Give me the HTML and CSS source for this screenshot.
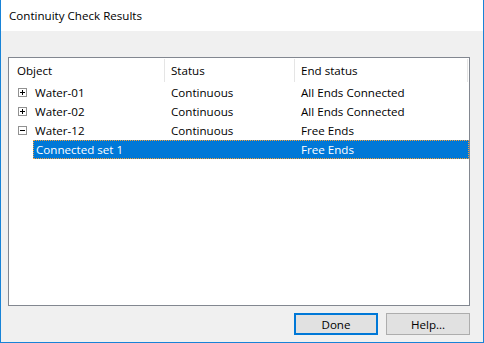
FILE: index.html
```html
<!DOCTYPE html>
<html lang="en">
<head>
    <meta charset="UTF-8">
    <meta name="viewport" content="width=device-width, initial-scale=1.0">
    <title>Continuity Check Results</title>
    <link rel="stylesheet" href="styles.css">
</head>
<body>
    <div class="window">
        <div class="titlebar">Continuity Check Results</div>
        <div class="client">
            <div class="listview">
                <div class="lv-header">
                    <div class="lv-col first">Object</div>
                    <div class="lv-col">Status</div>
                    <div class="lv-col">End status</div>
                </div>
                <div class="lv-row">
                    <div class="lv-cell first"><span class="expander plus"></span>Water-01</div>
                    <div class="lv-cell">Continuous</div>
                    <div class="lv-cell">All Ends Connected</div>
                </div>
                <div class="lv-row">
                    <div class="lv-cell first"><span class="expander plus"></span>Water-02</div>
                    <div class="lv-cell">Continuous</div>
                    <div class="lv-cell">All Ends Connected</div>
                </div>
                <div class="lv-row">
                    <div class="lv-cell first"><span class="expander minus"></span>Water-12</div>
                    <div class="lv-cell">Continuous</div>
                    <div class="lv-cell">Free Ends</div>
                </div>
                <div class="lv-row child selected">
                    <div class="lv-cell first">Connected set 1</div>
                    <div class="lv-cell"></div>
                    <div class="lv-cell">Free Ends</div>
                </div>
            </div>
            <div class="buttons">
                <button class="btn default">Done</button>
                <button class="btn">Help...</button>
            </div>
        </div>
    </div>
</body>
</html>
```

FILE: styles.css
```css
body {
    margin: 0;
    font-family: "Open Sans", "Noto Sans", sans-serif;
    font-size: 11.6px;
    color: #000;
}
.window {
    width: 484px;
    height: 343px;
    box-sizing: border-box;
    border: 1px solid #1883d7;
    border-top: none;
    display: flex;
    flex-direction: column;
}
.titlebar {
    height: 31px;
    line-height: 31px;
    padding-left: 8px;
    background-color: #fff;
}
.client {
    flex: 1;
    background-color: #f0f0f0;
    padding: 26px 13px 7px 7px;
    display: flex;
    flex-direction: column;
}
.listview {
    height: 249px;
    box-sizing: border-box;
    border: 1px solid #828790;
    background-color: #fff;
}
.lv-header, .lv-row {
    display: grid;
    grid-template-columns: 156px 130px 173px;
}
.lv-header {
    height: 25px;
}
.lv-col {
    margin: 1px 0;
    line-height: 23px;
    padding-left: 6px;
    border-right: 1px solid #e5e5e5;
}
.lv-col.first {
    padding-left: 8px;
}
.lv-row {
    height: 19px;
    line-height: 19px;
}
.lv-cell {
    padding-left: 6px;
    white-space: nowrap;
}
.lv-cell.first {
    display: flex;
    align-items: center;
    padding-left: 9px;
}
.expander {
    width: 9px;
    height: 9px;
    box-sizing: border-box;
    border: 1px solid #919191;
    margin-right: 8px;
    position: relative;
}
.expander::before, .plus::after {
    content: "";
    position: absolute;
    background-color: #000;
}
.expander::before {
    left: 1px;
    top: 3px;
    width: 5px;
    height: 1px;
}
.plus::after {
    left: 3px;
    top: 1px;
    width: 1px;
    height: 5px;
}
.lv-row.child {
    margin-left: 24px;
    grid-template-columns: 132px 130px 173px;
}
.selected {
    box-sizing: border-box;
    width: 436px;
    background-color: #0078d7;
    color: #fff;
    border: 1px dotted #f7a038;
    line-height: 17px;
}
.selected .lv-cell.first {
    padding-left: 2px;
}
.selected .lv-cell:last-child {
    margin-left: -1px;
}
.buttons {
    display: flex;
    justify-content: flex-end;
    gap: 8px;
    margin-top: 7px;
}
.btn {
    width: 84px;
    height: 22px;
    box-sizing: border-box;
    border: 1px solid #adadad;
    background-color: #e1e1e1;
    font-family: inherit;
    font-size: 11.6px;
    color: #000;
    padding: 0;
}
.btn.default {
    border: 2px solid #0078d7;
}
```
